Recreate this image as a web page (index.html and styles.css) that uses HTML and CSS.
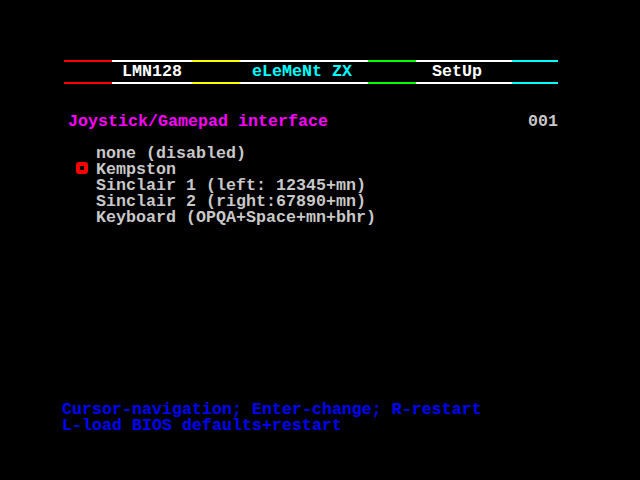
FILE: index.html
```html
<!DOCTYPE html>
<html>
<head>
  <meta charset="utf-8">
  <title>eLeMeNt ZX SetUp</title>
  <link rel="stylesheet" href="styles.css">
</head>
<body>
<div class="screen">
  <div class="header">
    <div class="seg red"></div>
    <div class="seg white lmn">LMN128</div>
    <div class="seg yellow"></div>
    <div class="seg white brand">eLeMeNt ZX</div>
    <div class="seg green"></div>
    <div class="seg white setup">SetUp</div>
    <div class="seg cyan"></div>
  </div>

  <div class="title">
    <span class="name">Joystick/Gamepad interface</span>
    <span class="num">001</span>
  </div>

  <div class="options">
    <div class="opt"><span class="mark"></span>none (disabled)</div>
    <div class="opt selected"><span class="mark"></span>Kempston</div>
    <div class="opt"><span class="mark"></span>Sinclair 1 (left: 12345+mn)</div>
    <div class="opt"><span class="mark"></span>Sinclair 2 (right:67890+mn)</div>
    <div class="opt"><span class="mark"></span>Keyboard (OPQA+Space+mn+bhr)</div>
  </div>

  <div class="help">
    <div>Cursor-navigation; Enter-change; R-restart</div>
    <div>L-load BIOS defaults+restart</div>
  </div>
</div>
</body>
</html>
```

FILE: styles.css
```css
/* экран настроек */
body {
  margin: 0;
  background: #000;
  font-family: "Liberation Mono", "DejaVu Sans Mono", monospace;
  font-weight: bold;
  font-size: 16.66px;
  line-height: 16px;
  color: #c8c8c8;
}
.screen {
  width: 640px;
  height: 480px;
  box-sizing: border-box;
  padding: 60px 82px 0 62px;
}
.header {
  display: flex;
  margin-left: 2px;
  height: 24px;
}
.seg {
  box-sizing: border-box;
  height: 24px;
  border-top: 2px solid #fff;
  border-bottom: 2px solid #fff;
  line-height: 20px;
  white-space: nowrap;
}
.red { width: 48px; border-color: #f00; }
.yellow { width: 48px; border-color: #ff0; }
.green { width: 48px; border-color: #0f0; }
.cyan { width: 46px; border-color: #0ff; }
.white { color: #fff; }
.lmn { width: 80px; padding-left: 10px; }
.brand { width: 128px; padding-left: 12px; color: #0ff; }
.setup { width: 96px; padding-left: 16px; }

.title {
  display: flex;
  justify-content: space-between;
  margin-top: 30px;
  padding-left: 6px;
}
.name { color: #f0f; }
.num { color: #c8c8c8; }

.options {
  margin-top: 16px;
}
.opt {
  display: flex;
  padding-left: 14px;
}
.mark {
  width: 12px;
  height: 12px;
  margin-right: 8px;
  box-sizing: border-box;
}
.selected .mark {
  border: 4px solid #f00;
  border-radius: 3px;
}

.help {
  margin-top: 176px;
  color: #0000ff;
}
```
